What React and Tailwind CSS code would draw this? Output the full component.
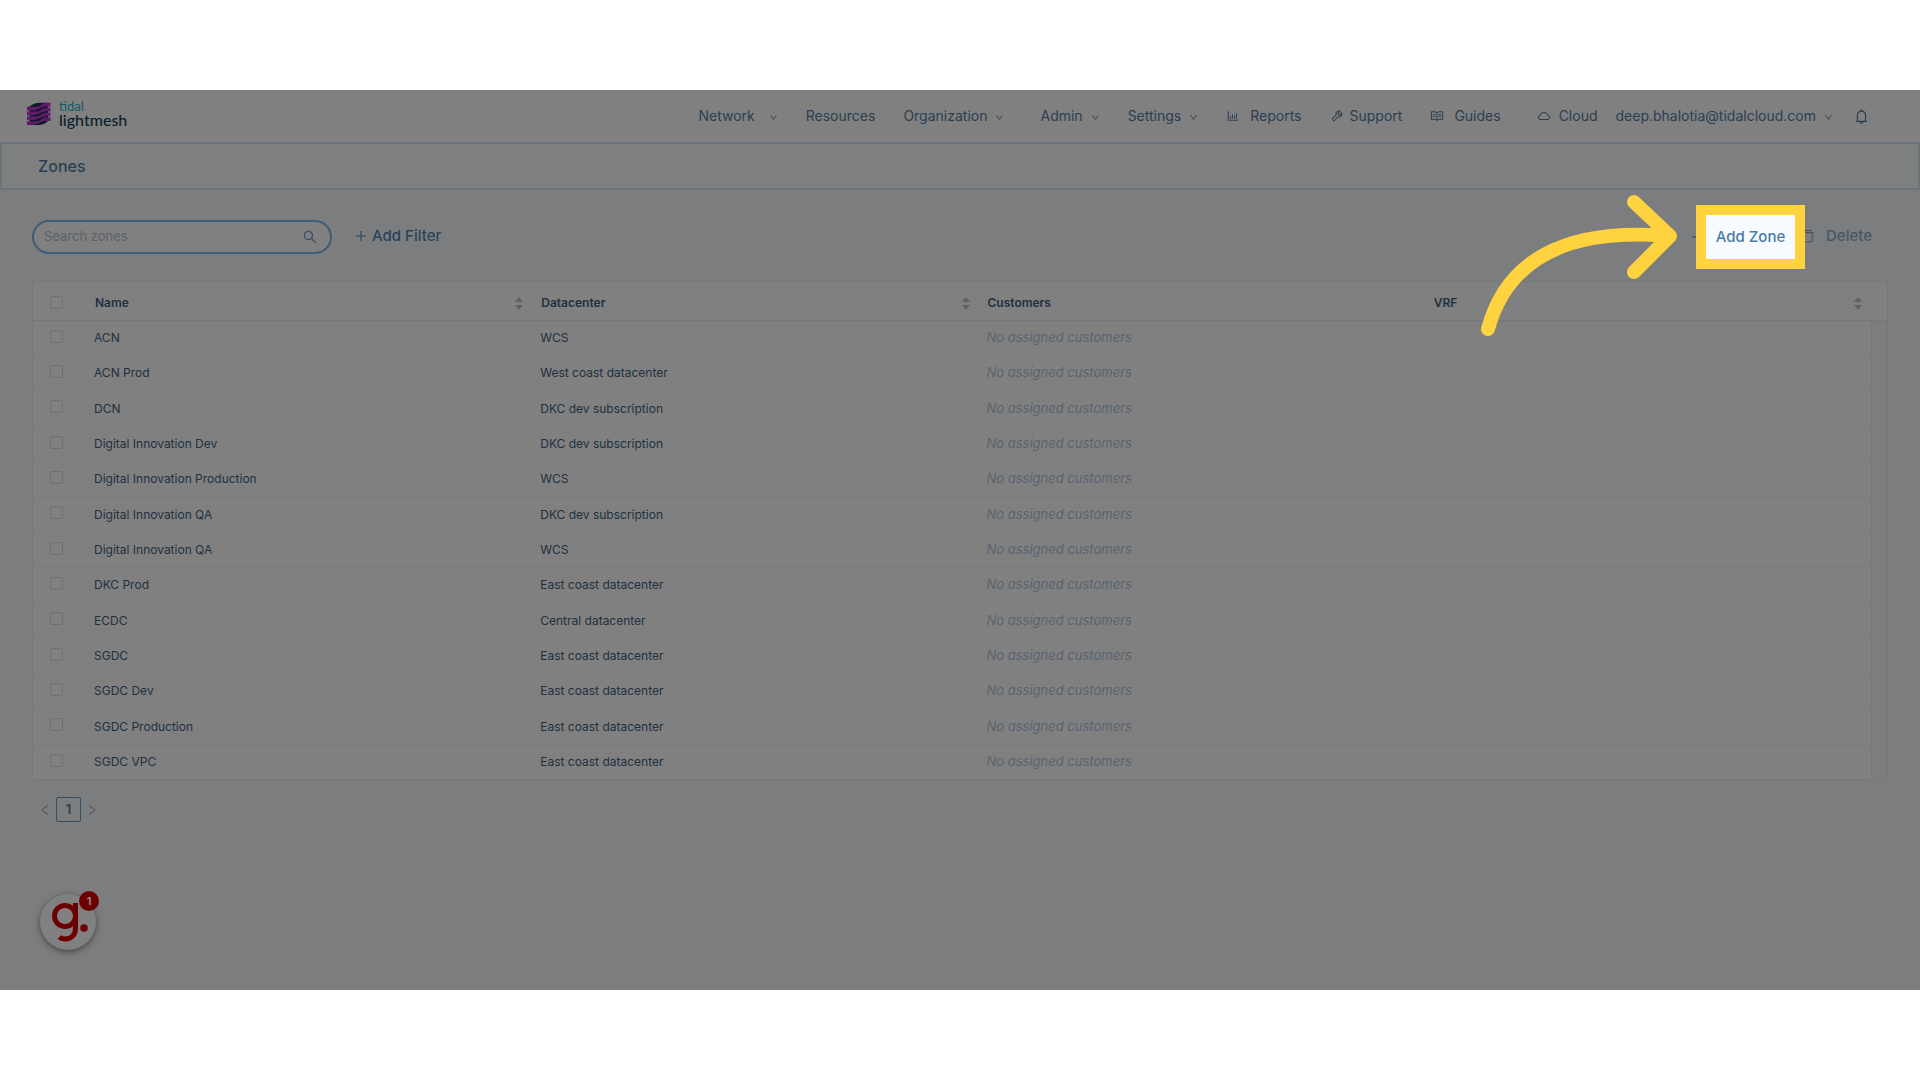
import React, { useState } from 'react';
import {
  AiOutlineBarChart,
  AiOutlineTool,
  AiOutlineRead,
  AiOutlineCloud,
  AiOutlineBell,
  AiOutlineDown,
  AiOutlineSearch,
  AiOutlinePlus,
  AiOutlineDelete,
  AiOutlineLeft,
  AiOutlineRight,
} from 'react-icons/ai';

const zones = [
  { name: 'ACN', datacenter: 'WCS' },
  { name: 'ACN Prod', datacenter: 'West coast datacenter' },
  { name: 'DCN', datacenter: 'DKC dev subscription' },
  { name: 'Digital Innovation Dev', datacenter: 'DKC dev subscription' },
  { name: 'Digital Innovation Production', datacenter: 'WCS' },
  { name: 'Digital Innovation QA', datacenter: 'DKC dev subscription' },
  { name: 'Digital Innovation QA', datacenter: 'WCS' },
  { name: 'DKC Prod', datacenter: 'East coast datacenter' },
  { name: 'ECDC', datacenter: 'Central datacenter' },
  { name: 'SGDC', datacenter: 'East coast datacenter' },
  { name: 'SGDC Dev', datacenter: 'East coast datacenter' },
  { name: 'SGDC Production', datacenter: 'East coast datacenter' },
  { name: 'SGDC VPC', datacenter: 'East coast datacenter' },
];

const columns = [
  { label: 'Name', sortable: true },
  { label: 'Datacenter', sortable: true },
  { label: 'Customers', sortable: false },
  { label: 'VRF', sortable: true },
];

const Logo = () => (
  <a href="#" className="flex items-center gap-2 pb-1">
    <svg viewBox="0 0 24 24" className="w-6 h-6">
      <path d="M2 5Q7 .8 13 .8H21V19Q17 23 11 23H3Z" fill="#0b1a26" />
      <g fill="#5c1c68">
        <path d="M0 4.800H5C10 4.800 12 4.500 14 3S17 .8 20 .8H23.500V4.600H20C15 4.600 14 6.200 11 7.200S7 8.600 0 8.600Z" />
        <path d="M0 9.600H5C10 9.600 12 9.300 14 7.800S17 5.600 20 5.600H23.500V9.400H20C15 9.400 14 11 11 12S7 13.400 0 13.400Z" />
        <path d="M0 14.400H5C10 14.400 12 14.100 14 12.600S17 10.400 20 10.400H23.500V14.200H20C15 14.200 14 15.800 11 16.800S7 18.200 0 18.200Z" />
        <path d="M0 19.200H5C10 19.200 12 18.900 14 17.400S17 15.200 20 15.200H23.500V19H20C15 19 14 20.600 11 21.600S7 23 0 23Z" />
      </g>
    </svg>
    <span className="flex flex-col pb-0.5 font-['Lato','Open_Sans',sans-serif]">
      <span className="text-[13px] leading-[13px] text-[#14586a]">tidal</span>
      <span className="text-base leading-[13px] font-medium text-[#0b222b]">lightmesh</span>
    </span>
  </a>
);

const NavItem = ({ label, icon: Icon, menu, className }) => (
  <a href="#" className={`flex items-center ${className}`}>
    {Icon && <Icon className="w-3.5 h-3.5" />}
    <span>{label}</span>
    {menu && <AiOutlineDown className="w-[9px] h-[9px] mt-0.5" />}
  </a>
);

const Navbar = () => (
  <header className="flex items-center justify-between h-[52px] pl-[27px] pr-[50px] bg-[#808080]">
    <Logo />
    <nav className="flex items-center text-sm text-[#2a3f52]">
      <NavItem label="Network" menu className="gap-3.5" />
      <NavItem label="Resources" className="ml-7" />
      <NavItem label="Organization" menu className="gap-2 ml-7" />
      <NavItem label="Admin" menu className="gap-2 ml-9" />
      <NavItem label="Settings" menu className="gap-2 ml-7" />
      <NavItem label="Reports" icon={AiOutlineBarChart} className="gap-2.5 ml-7" />
      <NavItem label="Support" icon={AiOutlineTool} className="gap-1.5 ml-7" />
      <NavItem label="Guides" icon={AiOutlineRead} className="gap-2.5 ml-7" />
      <NavItem label="Cloud" icon={AiOutlineCloud} className="gap-2 ml-9" />
      <NavItem label="deep.bhalotia@tidalcloud.com" menu className="gap-2 ml-[18px]" />
      <button type="button" aria-label="Notifications" className="ml-5">
        <AiOutlineBell className="w-[17px] h-[17px]" />
      </button>
    </nav>
  </header>
);

const Sorter = () => (
  <svg viewBox="0 0 8 13" className="w-2 h-[13px]" fill="#5e6062">
    <path d="M4 0L8 5H0Z" />
    <path d="M4 13L0 8H8Z" />
  </svg>
);

const Checkbox = ({ label }) => (
  <input
    type="checkbox"
    aria-label={label}
    className="block appearance-none w-[13px] h-[13px] rounded-xs border border-[#6d7176]"
  />
);

const ZonesTable = () => (
  <table className="w-full table-fixed border-separate border-spacing-0 border border-[#77787a] rounded-t-xs bg-[#808080] text-xs text-[#203040]">
    <colgroup>
      <col className="w-[53px]" />
      <col />
      <col />
      <col />
      <col />
      <col className="w-4" />
    </colgroup>
    <thead>
      <tr className="h-[39px]">
        <th className="pl-[17px] pt-0.5 border-b border-[#76777a]">
          <Checkbox label="Select all zones" />
        </th>
        {columns.map((col) => (
          <th key={col.label} className="px-[9px] pt-1 border-b border-[#76777a] text-left font-semibold">
            <div className="flex items-center justify-between">
              {col.label}
              {col.sortable && <Sorter />}
            </div>
          </th>
        ))}
        <th className="border-b border-[#76777a]" />
      </tr>
    </thead>
    <tbody>
      {zones.map((zone, i) => (
        <tr key={i} className="h-[35px] nth-[3n]:h-9">
          <td className="pl-[17px] pb-1 border-b border-[#7a7b7c]">
            <Checkbox label={`Select ${zone.name}`} />
          </td>
          <td className="px-2 border-b border-[#7a7b7c]">{zone.name}</td>
          <td className="px-2 border-b border-[#7a7b7c]">{zone.datacenter}</td>
          <td className="px-2 border-b border-[#7a7b7c] text-[13px] italic text-[#586470]">
            No assigned customers
          </td>
          <td className="border-b border-[#7a7b7c]" />
          {/* scrollbar gutter */}
          {i === 0 && <td rowSpan={zones.length} className="border-l border-[#77787a] bg-[#7d7d7d]" />}
        </tr>
      ))}
    </tbody>
  </table>
);

const ChatWidget = () => (
  <button type="button" aria-label="Open help" className="relative w-14 h-14 rounded-full bg-[#808080] shadow-[0_2px_6px_rgba(0,0,0,0.45)]">
    <svg viewBox="0 0 56 56" className="w-14 h-14" fill="none" stroke="#6c0000" strokeWidth="5">
      <circle cx="25" cy="22" r="10.500" />
      <path d="M35.500 9V34C35.500 41 31 45 25.500 45C23 45 21 44.500 19.500 43" />
      <circle cx="44" cy="34" r="3.800" fill="#6c0000" stroke="none" />
    </svg>
    <span className="absolute -top-[3px] -right-[3px] flex items-center justify-center w-5 h-5 rounded-full bg-[#6c0000] text-[11px] font-bold text-[#9a8080]">
      1
    </span>
  </button>
);

export default function App() {
  const [query, setQuery] = useState('');

  return (
    <div className="py-[90px] bg-white font-['Inter','Liberation_Sans',sans-serif]">
      <div className="min-h-[900px] bg-[#7b7d7f]">
        <Navbar />

        <div className="h-12 flex items-center pl-9 border-2 border-[#6d747b] bg-[#7e807f]">
          <h1 className="text-base font-medium text-[#2a3f52]">Zones</h1>
        </div>

        <main className="px-8">
          {/* Toolbar */}
          <div className="flex items-center justify-between pt-[30px] pb-[27px]">
            <div className="flex items-center gap-[22px]">
              <div className="flex items-center w-[300px] h-[34px] pl-[10px] pr-3 rounded-full border-2 border-[#415c74] bg-[#808080]">
                <input
                  type="text"
                  aria-label="Search zones"
                  placeholder="Search zones"
                  value={query}
                  onChange={(e) => setQuery(e.target.value)}
                  className="flex-1 min-w-0 bg-transparent text-[13px] placeholder-[#5b6268] focus:outline-none"
                />
                <AiOutlineSearch className="w-4 h-4 text-[#34506a]" />
              </div>
              <button type="button" className="flex items-center gap-1 pb-0.5 text-[15px] font-medium text-[#2a435a]">
                <AiOutlinePlus className="w-3.5 h-3.5" />
                Add Filter
              </button>
            </div>

            <div className="relative flex items-center pr-4">
              <AiOutlinePlus className="w-3.5 h-3.5 text-[#2a435a]" />
              {/* Highlighted action */}
              <button
                type="button"
                className="relative z-10 -my-4 -ml-2 w-[109px] h-16 border-10 border-[#ffd23f] bg-[#f7fafe] text-[15px] font-medium text-[#4a7ca8]"
              >
                Add Zone
              </button>
              <button type="button" className="flex items-center gap-2.5 -ml-[5px] pb-0.5 text-[15px] font-medium text-[#465867]">
                <AiOutlineDelete className="w-4 h-4" />
                Delete
              </button>
              <svg
                viewBox="0 0 200 146"
                className="absolute right-[210px] -top-[28px] w-[200px] h-[146px]"
                fill="none"
                stroke="#ffd23f"
                strokeWidth="14"
                strokeLinecap="round"
                strokeLinejoin="round"
              >
                <path d="M10 136C28 70 84 34 190 43" />
                <path d="M156 9L192 43L156 79" />
              </svg>
            </div>
          </div>

          <ZonesTable />

          {/* Pagination */}
          <div className="flex items-center gap-1 pt-4 pl-1.5 text-[#56595c]">
            <button type="button" aria-label="Previous page">
              <AiOutlineLeft className="w-3.5 h-3.5" />
            </button>
            <button type="button" className="w-[25px] h-[25px] rounded-xs border border-[#2f5068] text-[13px] font-semibold text-[#243f56]">
              1
            </button>
            <button type="button" aria-label="Next page">
              <AiOutlineRight className="w-3.5 h-3.5" />
            </button>
          </div>

          <div className="pt-[72px] pl-2">
            <ChatWidget />
          </div>
        </main>
      </div>
    </div>
  );
}
